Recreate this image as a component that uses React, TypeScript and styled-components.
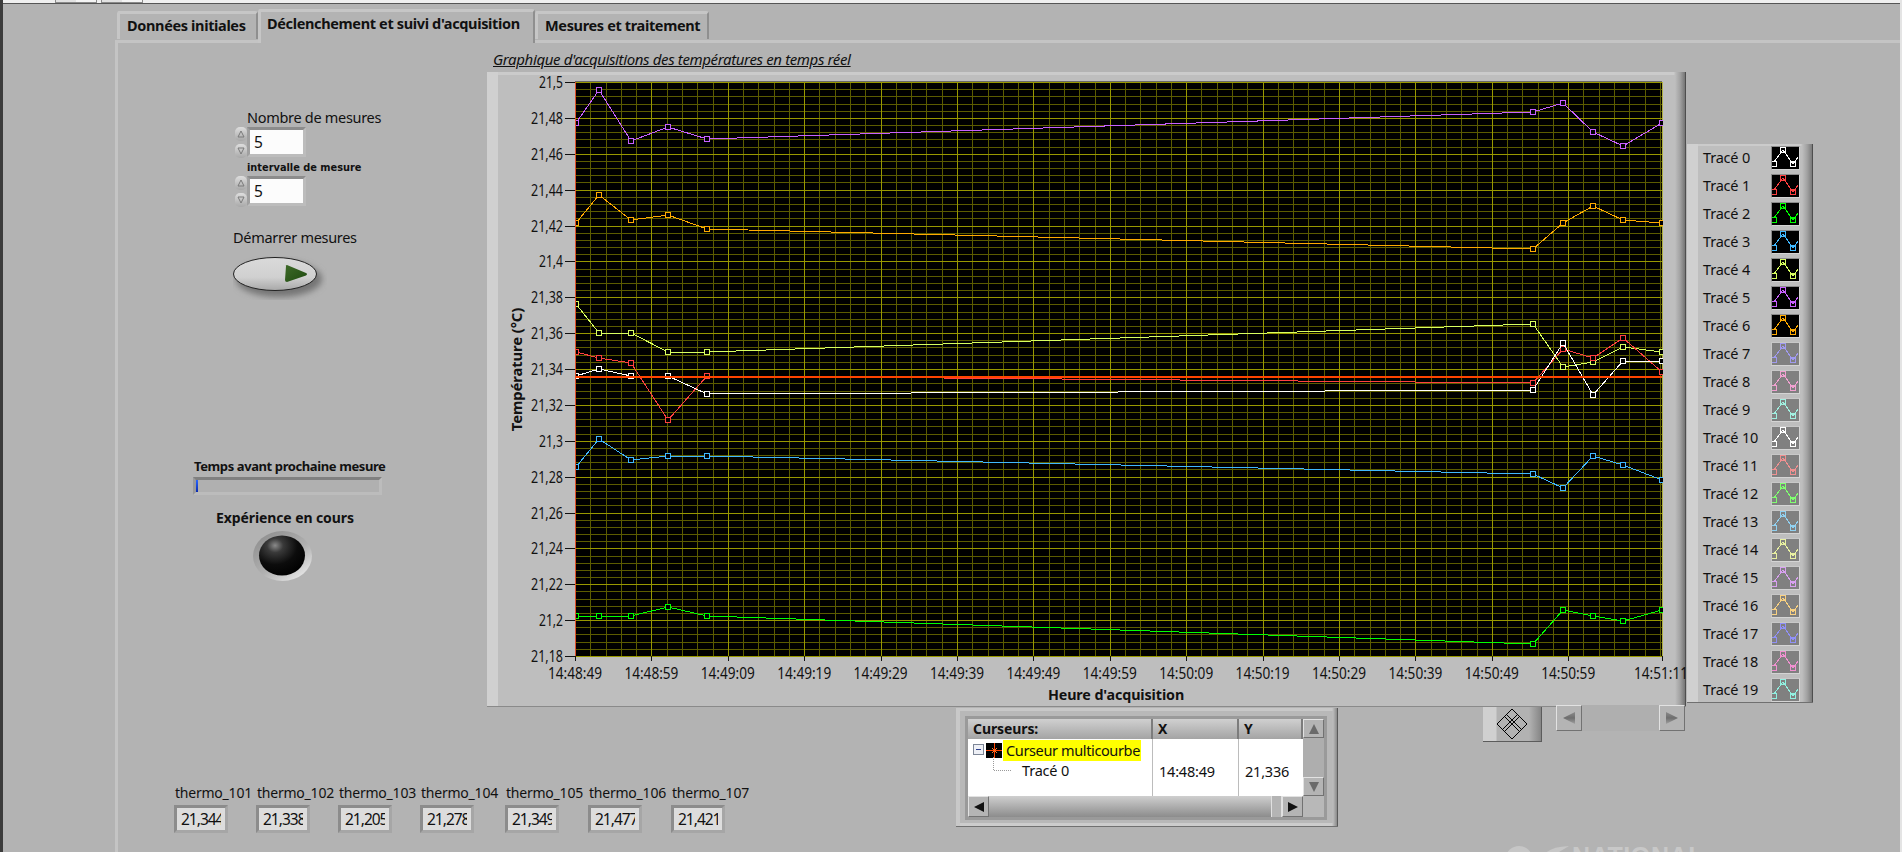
import React from "react";
import styled, { createGlobalStyle } from "styled-components";

const GlobalStyle = createGlobalStyle`
  html, body { margin: 0; padding: 0; background: #b3b3b3; overflow: hidden; }
  * { box-sizing: border-box; }
`;

const FONT = `"Noto Sans", "Open Sans", sans-serif`;

const Window = styled.div`
  position: relative;
  width: 1902px;
  height: 852px;
  overflow: hidden;
  display: flex;
  flex-direction: column;
  background: #b3b3b3;
  border-left: 3px solid #3c3c3c;
  border-right: 2px solid #e4e4e4;
  font-family: ${FONT};
  color: #111;
`;

const TopStrip = styled.div`
  height: 4px;
  flex: none;
  display: flex;
  gap: 4px;
  padding-left: 52px;
  background: #efefef;
  border-bottom: 1px solid #555;
`;

const TopButton = styled.span`
  width: 42px;
  height: 3px;
  display: flex;
  background: linear-gradient(to right, #e2e2e2 50%, #f4f4f4 50%);
  border: 1px solid #8a8a8a;
  border-top: 0;
`;

const TabStage = styled.div`
  flex: 1;
  display: flex;
  flex-direction: column;
  padding-left: 112px;
  min-height: 0;
`;

const TabStrip = styled.div`
  height: 31px;
  margin-top: 5px;
  padding-left: 2px;
  display: flex;
  align-items: flex-end;
  flex: none;
  position: relative;
  z-index: 2;
`;

const Tab = styled.div<{ $active?: boolean; $w: number }>`
  width: ${(p) => p.$w}px;
  height: ${(p) => (p.$active ? 34 : 28)}px;
  margin-bottom: ${(p) => (p.$active ? -3 : 1)}px;
  padding: ${(p) => (p.$active ? "1px 0 0 6px" : "1px 0 0 7px")};
  background: #b3b3b3;
  border: 3px solid #c6c6c6;
  border-bottom: 0;
  border-right: 2px solid #8f8f8f;
  border-radius: 3px 3px 0 0;
  font-size: 14.5px;
  font-weight: 700;
  letter-spacing: -0.35px;
  line-height: 20px;
  white-space: nowrap;
`;

const Pane = styled.div`
  flex: 1;
  border-top: 3px solid #c4c4c4;
  border-left: 3px solid #c4c4c4;
  display: flex;
  flex-direction: column;
  min-height: 0;
`;

const UpperRow = styled.div`
  display: flex;
  height: 664px;
  flex: none;
`;

const LowerRow = styled.div`
  display: flex;
  align-items: flex-start;
  flex: 1;
`;

const LeftColumn = styled.div`
  width: 369px;
  flex: none;
  display: flex;
  flex-direction: column;
  align-items: flex-start;
  padding-top: 64px;
`;

const Caption = styled.div<{ $indent: number; $top?: number; $bold?: number }>`
  margin-left: ${(p) => p.$indent}px;
  margin-top: ${(p) => p.$top ?? 0}px;
  height: 20px;
  line-height: 20px;
  font-size: ${(p) => p.$bold ?? 14.5}px;
  font-weight: ${(p) => (p.$bold ? 700 : 400)};
  letter-spacing: ${(p) => (p.$bold ? (p.$bold < 13.5 ? "-0.4px" : "-0.1px") : "-0.3px")};
  white-space: nowrap;
`;

const TinyCaption = styled.div`
  margin-left: 129px;
  height: 18px;
  line-height: 20px;
  font-family: "DejaVu Sans", sans-serif;
  font-size: 9.8px;
  font-weight: 700;
  white-space: nowrap;
`;

const NumericRow = styled.div`
  margin-left: 117px;
  display: flex;
  height: 31px;
`;

const Spinner = styled.div`
  width: 12px;
  display: flex;
  flex-direction: column;
  justify-content: space-between;
`;

const SpinButton = styled.div`
  width: 12px;
  height: 14px;
  display: flex;
  background: linear-gradient(to bottom, #dedede, #a8a8a8);
  border-radius: 5px;
  align-items: center;
  justify-content: center;
`;

const NumericField = styled.div`
  width: 59px;
  height: 30px;
  border-style: solid;
  border-width: 3px;
  border-color: #8c8c8c #bcbcbc #bcbcbc #a0a0a0;
  background: #fcfcfc;
  padding-left: 4px;
  font-size: 15.5px;
  line-height: 24px;
`;

const OvalWrap = styled.div`
  margin-left: 115px;
  margin-top: 9px;
  height: 44px;
  display: flex;
`;

const ProgressTrack = styled.div`
  margin-left: 75px;
  margin-top: 1px;
  width: 189px;
  height: 18px;
  background: #b0b0b0;
  border-style: solid;
  border-width: 3px;
  border-color: #808080 #bcbcbc #bcbcbc #9a9a9a;
  display: flex;
`;

const ProgressFill = styled.div`
  width: 2px;
  background: linear-gradient(to bottom, #2a66ff, #0a2bb0);
`;

const LedWrap = styled.div`
  margin-left: 135px;
  margin-top: 3px;
  display: flex;
`;

const CenterColumn = styled.div`
  width: 1199px;
  flex: none;
  display: flex;
  flex-direction: column;
`;

const ChartTitle = styled.div`
  height: 29px;
  padding: 6px 0 0 6px;
  line-height: 20px;
  font-size: 15px;
  font-style: italic;
  text-decoration: underline;
  letter-spacing: -0.37px;
  white-space: nowrap;
`;

const ChartFrame = styled.div`
  height: 635px;
  display: flex;
  background:
    linear-gradient(to right, #d0d0d0 0 11px, transparent 11px),
    linear-gradient(to left, #4e4e4e 0 1px, #757575 1px, #a2a2a2 6px, #bebebe 11px, transparent 12px),
    linear-gradient(to bottom, #cbcbcb 0 3px, #bebebe 3px);
  border-bottom: 1px solid #8a8a8a;
`;

const LegendPanel = styled.div`
  width: 126px;
  height: 559px;
  margin: 101px 0 0 1px;
  padding: 2px 0 0 16px;
  overflow: hidden;
  flex: none;
  border-bottom: 1px solid #707070;
  background:
    linear-gradient(to right, #d0d0d0 0 11px, transparent 11px),
    linear-gradient(to left, #4e4e4e 0 1px, #7a7a7a 1px, #a2a2a2 6px, #bebebe 11px, transparent 12px),
    linear-gradient(to bottom, #cbcbcb 0 2px, #bebebe 2px);
`;

const LegendRow = styled.div`
  height: 28px;
  display: flex;
  align-items: flex-start;
`;

const LegendLabel = styled.span`
  width: 68px;
  height: 23px;
  line-height: 22px;
  font-size: 14.5px;
  letter-spacing: -0.2px;
  white-space: nowrap;
`;

const Swatch = styled.div<{ $active: boolean }>`
  width: 29px;
  height: 24px;
  display: flex;
  background: ${(p) => (p.$active ? "#000" : "#808080")};
  border-right: 1px solid #d4d4d4;
  border-bottom: 1px solid #d4d4d4;
  border-left: 1px solid ${(p) => (p.$active ? "#8a8a8a" : "#c8c8c8")};
  border-top: 1px solid ${(p) => (p.$active ? "#8a8a8a" : "#c8c8c8")};
`;

const ThermoGrid = styled.div`
  margin: 76px 0 0 56px;
  display: grid;
  grid-template-columns: 82px 82px 82px 85px 83px 83px 55px;
  flex: none;
`;

const ThermoCell = styled.div`
  display: flex;
  flex-direction: column;
`;

const ThermoLabel = styled.div`
  height: 22px;
  margin-left: 1px;
  line-height: 20px;
  font-size: 14px;
  letter-spacing: -0.22px;
  white-space: nowrap;
`;

const ThermoBox = styled.div`
  width: 54px;
  height: 28px;
  border-style: solid;
  border-width: 3px;
  border-color: #8c8c8c #a6a6a6 #a6a6a6 #8c8c8c;
  background: #dddddd;
  padding: 0 4px 0 4px;
`;

const ThermoValue = styled.div`
  width: 40px;
  overflow: hidden;
  white-space: nowrap;
  font-size: 15.5px;
  letter-spacing: -1px;
  line-height: 22px;
`;

const CursorPanel = styled.div`
  margin: 1px 0 0 230px;
  width: 382px;
  height: 119px;
  flex: none;
  padding: 11px 0 0 12px;
  border-bottom: 1px solid #707070;
  background:
    linear-gradient(to right, #c8c8c8 0 4px, transparent 4px),
    linear-gradient(to left, #5a5a5a 0 1px, #8a8a8a 1px, #bcbcbc 5px, transparent 6px),
    linear-gradient(to bottom, #c8c8c8 0 3px, #b8b8b8 3px, #b8b8b8 calc(100% - 3px), #cccccc calc(100% - 3px));
`;

const CursorGrid = styled.div`
  width: 356px;
  display: grid;
  grid-template-columns: 185px 86px 64px 21px;
  grid-template-rows: 20px 57px 21px;
  outline: 3px solid #9a9a9a;
`;

const HeaderCell = styled.div<{ $pad: number }>`
  padding-left: ${(p) => p.$pad}px;
  background: linear-gradient(to bottom, #d0d0d0, #a4a4a4);
  border-right: 2px solid #7c7c7c;
  font-size: 14px;
  font-weight: 700;
  line-height: 20px;
  letter-spacing: -0.1px;
`;

const BodyCell = styled.div<{ $divider?: boolean }>`
  position: relative;
  background: #fff;
  border-right: ${(p) => (p.$divider ? "1px solid #bcbcbc" : "0")};
  font-size: 14.5px;
  letter-spacing: -0.2px;
`;

const TreeRow = styled.div`
  height: 22px;
  display: flex;
  align-items: center;
  padding-left: 5px;
`;

const Highlight = styled.span`
  height: 21px;
  line-height: 21px;
  padding: 0 1px 0 3px;
  margin-left: 1px;
  letter-spacing: -0.37px;
  background: #ffff00;
  white-space: nowrap;
`;

const TreeChild = styled.div`
  position: absolute;
  left: 54px;
  top: 20px;
  height: 22px;
  line-height: 22px;
`;

const ValueText = styled.div`
  padding: 21px 0 0 6px;
  line-height: 22px;
`;

const VScrollCell = styled.div`
  grid-column: 4;
  grid-row: 1 / 3;
  display: flex;
  flex-direction: column;
  justify-content: space-between;
  background: #aeaeae;
`;

const HScroll = styled.div`
  grid-column: 1 / 4;
  display: flex;
  background: #b8b8b8;
`;

const ScrollThumb = styled.div`
  width: 282px;
  background: linear-gradient(to bottom, #cfcfcf, #8c8c8c);
`;

const ScrollGap = styled.div`
  flex: 1;
  border-left: 1px solid #e0e0e0;
  border-right: 1px solid #e0e0e0;
  background: #b4b4b4;
`;

const SquareButton = styled.div<{ $size: number }>`
  width: ${(p) => p.$size}px;
  height: ${(p) => (p.$size === 21 ? 19 : p.$size)}px;
  display: flex;
  align-items: center;
  justify-content: center;
  background: #b4b4b4;
  border-style: solid;
  border-width: 1px;
  border-color: #e2e2e2 #727272 #727272 #e2e2e2;
`;

const HButton = styled(SquareButton)`
  height: 21px;
`;

const DiamondButton = styled.div`
  margin: 0 0 0 145px;
  width: 59px;
  height: 35px;
  flex: none;
  display: flex;
  align-items: center;
  justify-content: center;
  background: linear-gradient(to right, #d0d0d0 0 13px, #b2b2b2 14px, #b2b2b2 46px, #868686 58px);
  border-bottom: 1px solid #5c5c5c;
  border-right: 1px solid #5c5c5c;
`;

const PanButtons = styled.div`
  margin: -2px 0 0 14px;
  width: 129px;
  height: 26px;
  flex: none;
  display: flex;
  justify-content: space-between;
  background: #afafaf;
`;

const Watermark = styled.div`
  position: absolute;
  left: 1494px;
  top: 845px;
  display: flex;
  align-items: flex-start;
  gap: 3px;
  color: #c8c8c8;
  font-family: "Liberation Sans", sans-serif;
  font-weight: 700;
  font-size: 25px;
  line-height: 22px;
  letter-spacing: 0.6px;
`;

/* ---------- chart data ---------- */

const X_PTS = [576, 599, 631, 668, 707, 1533, 1563, 1593, 1623, 1662];

const SERIES: { color: string; y: number[] }[] = [
  { color: "#c860ff", y: [123, 90, 141, 127, 139, 112, 103, 132, 146, 123] },
  { color: "#ffaa00", y: [223, 195, 220, 215, 229, 249, 223, 206, 220, 223] },
  { color: "#d8ff60", y: [304, 333, 333, 352, 352, 324, 367, 362, 347, 352] },
  { color: "#40b8ff", y: [467, 439, 460, 456, 456, 474, 488, 456, 465, 480] },
  { color: "#00ff00", y: [616, 616, 616, 607, 616, 644, 610, 616, 621, 610] },
  { color: "#ff4040", y: [352, 358, 363, 420, 376, 383, 349, 358, 338, 372] },
  { color: "#ffffff", y: [376, 369, 376, 376, 394, 390, 343, 395, 361, 361] },
];

const PLOT = { l: 575, r: 1662, t: 82, b: 656 };
const Y_STEP = (PLOT.b - PLOT.t) / 16;
const X_STEP = 76.4;

const Y_LABELS = ["21,5","21,48","21,46","21,44","21,42","21,4","21,38","21,36","21,34","21,32","21,3","21,28","21,26","21,24","21,22","21,2","21,18"];
const X_LABELS = ["14:48:49","14:48:59","14:49:09","14:49:19","14:49:29","14:49:39","14:49:49","14:49:59","14:50:09","14:50:19","14:50:29","14:50:39","14:50:49","14:50:59"];

const axisText = { fontFamily: FONT, fontSize: 16, fill: "#111" } as const;
const axisTitle = { fontFamily: FONT, fontWeight: 700, letterSpacing: "-0.1px", fill: "#111" } as const;

function Chart() {
  const minorV: number[] = [];
  for (let x = PLOT.l; x < PLOT.r; x += X_STEP / 5) minorV.push(Math.round(x));
  const minorH: number[] = [];
  for (let i = 0; i <= 80; i++) minorH.push(Math.round(PLOT.t + (i * Y_STEP) / 5));
  return (
    <svg width="1199" height="634" viewBox="487 72 1199 634">
      <defs>
        <clipPath id="plotClip">
          <rect x={PLOT.l} y={PLOT.t} width={PLOT.r - PLOT.l + 1} height={PLOT.b - PLOT.t} />
        </clipPath>
      </defs>
      <rect x={PLOT.l} y={PLOT.t} width={PLOT.r - PLOT.l} height={PLOT.b - PLOT.t} fill="#000" />
      <line x1={PLOT.l} x2={PLOT.r} y1={PLOT.t - 0.5} y2={PLOT.t - 0.5} stroke="#6a6a6a" />
      <g shapeRendering="crispEdges" strokeWidth="1">
        {minorV.map((x) => (
          <line key={`mv${x}`} x1={x + 0.5} x2={x + 0.5} y1={PLOT.t} y2={PLOT.b} stroke="#5c5c00" />
        ))}
        {minorH.map((y) => (
          <line key={`mh${y}`} x1={PLOT.l} x2={PLOT.r} y1={y + 0.5} y2={y + 0.5} stroke="#5c5c00" />
        ))}
        {X_LABELS.map((_, i) => {
          const x = Math.round(PLOT.l + i * X_STEP) + 0.5;
          return <line key={`Mv${i}`} x1={x} x2={x} y1={PLOT.t} y2={PLOT.b} stroke="#989800" />;
        })}
        {Y_LABELS.map((_, i) => {
          const y = Math.round(PLOT.t + i * Y_STEP) + 0.5;
          return <line key={`Mh${i}`} x1={PLOT.l} x2={PLOT.r} y1={y} y2={y} stroke="#989800" />;
        })}
        <line x1={PLOT.r + 0.5} x2={PLOT.r + 0.5} y1={PLOT.t} y2={PLOT.b} stroke="#b0b040" />
      </g>
      <g clipPath="url(#plotClip)" shapeRendering="crispEdges">
        {SERIES.map((s) => (
          <g key={s.color}>
            <polyline
              points={s.y.map((y, i) => `${X_PTS[i]},${y}`).join(" ")}
              fill="none"
              stroke={s.color}
              strokeWidth="1"
            />
            {s.y.map((y, i) => (
              <rect key={i} x={X_PTS[i] - 2.5} y={y - 2.5} width="5" height="5" fill="#000" stroke={s.color} strokeWidth="1" />
            ))}
          </g>
        ))}
        <line x1={PLOT.l} x2={PLOT.r} y1={376.5} y2={376.5} stroke="#ff4400" strokeWidth="2" />
      </g>
      <line x1={PLOT.l + 0.5} x2={PLOT.l + 0.5} y1={PLOT.t} y2={PLOT.b} stroke="#e0502a" strokeWidth="1.4" shapeRendering="crispEdges" />
      <g shapeRendering="crispEdges" stroke="#111" strokeWidth="1">
        {Y_LABELS.map((_, i) => {
          const y = Math.round(PLOT.t + i * Y_STEP) + 0.5;
          return <line key={`ty${i}`} x1={PLOT.l - 10} x2={PLOT.l} y1={y} y2={y} />;
        })}
        {X_LABELS.map((_, i) => {
          const x = Math.round(PLOT.l + i * X_STEP) + 0.5;
          return <line key={`tx${i}`} x1={x} x2={x} y1={PLOT.b} y2={PLOT.b + 5} />;
        })}
        <line x1={PLOT.r} x2={PLOT.r} y1={PLOT.b} y2={PLOT.b + 5} />
      </g>
      {Y_LABELS.map((t, i) => (
        <text
          key={t}
          x={563}
          y={PLOT.t + i * Y_STEP + 6}
          textAnchor="end"
          textLength={t.length === 5 ? 32 : 24}
          lengthAdjust="spacingAndGlyphs"
          style={axisText}
        >
          {t}
        </text>
      ))}
      {X_LABELS.map((t, i) => (
        <text
          key={t}
          x={PLOT.l + i * X_STEP}
          y={679}
          textAnchor="middle"
          textLength={54}
          lengthAdjust="spacingAndGlyphs"
          style={axisText}
        >
          {t}
        </text>
      ))}
      <text x={1634} y={679} textLength={54} lengthAdjust="spacingAndGlyphs" style={axisText}>14:51:11</text>
      <text x={1116} y={700} textAnchor="middle" style={{ ...axisTitle, fontSize: 14.3 }}>Heure d'acquisition</text>
      <text transform="translate(522 369.5) rotate(-90)" textAnchor="middle" style={{ ...axisTitle, fontSize: 14.8 }}>Température (°C)</text>
    </svg>
  );
}

const LEGEND = ["#ffffff","#ff4040","#00ff00","#40b8ff","#d8ff60","#c860ff","#ffaa00","#a09af0","#f0a0d0","#a0f0e0","#ffffff","#f09090","#80ff70","#90d0f0","#e8f0a0","#d8a0f0","#f8d080","#9090f8","#f090d0","#90f0e0"];

function PlotGlyph({ color }: { color: string }) {
  return (
    <svg width="27" height="22" viewBox="0 0 27 22" shapeRendering="crispEdges">
      <polyline points="2,15 11,3 21,17 26,10" fill="none" stroke={color} strokeWidth="1" />
      {[[2, 17], [11, 3], [21, 17]].map(([x, y]) => (
        <rect key={x} x={x - 2.5} y={y - 2.5} width="5" height="5" fill="none" stroke={color} strokeWidth="1" />
      ))}
    </svg>
  );
}

function Arrow({ dir, size = 12, color = "#6a6a6a" }: { dir: "up" | "down" | "left" | "right"; size?: number; color?: string }) {
  const rot = { up: 0, right: 90, down: 180, left: 270 }[dir];
  return (
    <svg width={size} height={size} viewBox="0 0 12 12">
      <polygon points="6,1 11,11 1,11" fill={color} transform={`rotate(${rot} 6 6)`} />
    </svg>
  );
}

function SpinArrow({ up }: { up?: boolean }) {
  return (
    <svg width="8" height="8" viewBox="0 0 8 8">
      <polygon points={up ? "4,1 7,7 1,7" : "1,1 7,1 4,7"} fill="none" stroke="#7a7a7a" strokeWidth="1" />
    </svg>
  );
}

function Numeric({ value }: { value: string }) {
  return (
    <NumericRow>
      <Spinner>
        <SpinButton><SpinArrow up /></SpinButton>
        <SpinButton><SpinArrow /></SpinButton>
      </Spinner>
      <NumericField>{value}</NumericField>
    </NumericRow>
  );
}

function OvalButton() {
  return (
    <svg width="94" height="44" viewBox="0 0 94 44">
      <defs>
        <linearGradient id="ovalFill" x1="0" y1="0" x2="0" y2="1">
          <stop offset="0" stopColor="#dadada" />
          <stop offset="0.6" stopColor="#d0d0d0" />
          <stop offset="1" stopColor="#a8a8a8" />
        </linearGradient>
        <linearGradient id="arrowFill" x1="0" y1="0" x2="1" y2="1">
          <stop offset="0" stopColor="#3e6a28" />
          <stop offset="1" stopColor="#1f4a10" />
        </linearGradient>
        <filter id="ovalBlur" x="-20%" y="-30%" width="140%" height="160%">
          <feGaussianBlur stdDeviation="3" />
        </filter>
      </defs>
      <ellipse cx="46" cy="23" rx="43" ry="18" fill="#757575" filter="url(#ovalBlur)" />
      <ellipse cx="42" cy="18" rx="41.5" ry="16.5" fill="url(#ovalFill)" stroke="#222" strokeWidth="1" />
      <path d="M53 10 Q52 9.5 54 9 L73 17 Q75 18 73 19.5 L54 26 Q52 26 52 24 Z" fill="url(#arrowFill)" />
    </svg>
  );
}

function Led() {
  return (
    <svg width="59" height="50" viewBox="0 0 59 50">
      <defs>
        <linearGradient id="ledRing" x1="0.1" y1="0" x2="0.9" y2="1">
          <stop offset="0" stopColor="#8c8c8c" />
          <stop offset="0.55" stopColor="#b0b0b0" />
          <stop offset="1" stopColor="#f0f0f0" />
        </linearGradient>
        <radialGradient id="ledCore" cx="0.35" cy="0.25" r="0.8">
          <stop offset="0" stopColor="#8a8a8a" />
          <stop offset="0.22" stopColor="#3a3a3a" />
          <stop offset="0.6" stopColor="#0c0c0c" />
          <stop offset="1" stopColor="#000" />
        </radialGradient>
      </defs>
      <ellipse cx="29.5" cy="25" rx="29.5" ry="25" fill="url(#ledRing)" />
      <ellipse cx="29" cy="24.5" rx="23" ry="20" fill="url(#ledCore)" />
    </svg>
  );
}

function CursorIcon() {
  return (
    <svg width="16" height="15" viewBox="0 0 16 15" shapeRendering="crispEdges">
      <rect width="16" height="15" fill="#000" />
      <path d="M8.5 0V15M0 7.5H16" stroke="#ff4400" strokeWidth="1" />
      <path d="M6 5L11 10M11 5L6 10" stroke="#ff7a30" strokeWidth="1" />
    </svg>
  );
}

function ExpandBox() {
  return (
    <svg width="12" height="12" viewBox="0 0 12 12" shapeRendering="crispEdges">
      <rect x="0.5" y="0.5" width="10" height="10" fill="#eef0f6" stroke="#7d8696" />
      <path d="M3 5.5H8" stroke="#2b3f8f" />
    </svg>
  );
}

const TreeSpacer = styled.span`
  width: 1px;
`;

const TreeLine = styled.svg`
  position: absolute;
  left: 25px;
  top: 18px;
`;

function DiamondIcon() {
  return (
    <svg width="32" height="32" viewBox="0 0 32 32" shapeRendering="crispEdges">
      <g fill="none" stroke="#000" strokeWidth="1">
        <path d="M16 1L31 16L16 31L1 16Z" />
        <path d="M8.5 8.5L23.5 23.5M10.5 6.5L25.5 21.5M23.5 8.5L8.5 23.5M21.5 6.5L6.5 21.5" />
      </g>
    </svg>
  );
}

function PanArrow({ left }: { left?: boolean }) {
  return (
    <svg width="14" height="14" viewBox="0 0 14 14">
      <defs>
        <linearGradient id={left ? "panL" : "panR"} x1="0" y1="0" x2="0" y2="1">
          <stop offset="0" stopColor="#8a8a8a" />
          <stop offset="0.5" stopColor="#6e6e6e" />
          <stop offset="1" stopColor="#a0a0a0" />
        </linearGradient>
      </defs>
      <polygon points={left ? "13,1 13,13 1,7" : "1,1 1,13 13,7"} fill={`url(#${left ? "panL" : "panR"})`} />
    </svg>
  );
}

const THERMO = [
  ["thermo_101", "21,344"],
  ["thermo_102", "21,338"],
  ["thermo_103", "21,205"],
  ["thermo_104", "21,278"],
  ["thermo_105", "21,349"],
  ["thermo_106", "21,477"],
  ["thermo_107", "21,421"],
];

export default function App() {
  return (
    <>
      <GlobalStyle />
      <Window>
        <TopStrip>
          <TopButton />
          <TopButton />
        </TopStrip>
        <TabStage>
          <TabStrip>
            <Tab $w={141}>Données initiales</Tab>
            <Tab $w={277} $active>Déclenchement et suivi d'acquisition</Tab>
            <Tab $w={174}>Mesures et traitement</Tab>
          </TabStrip>
          <Pane>
            <UpperRow>
              <LeftColumn>
                <Caption $indent={129}>Nombre de mesures</Caption>
                <Numeric value="5" />
                <TinyCaption>intervalle de mesure</TinyCaption>
                <Numeric value="5" />
                <Caption $indent={115} $top={20}>Démarrer mesures</Caption>
                <OvalWrap><OvalButton /></OvalWrap>
                <Caption $indent={76} $top={156} $bold={13}>Temps avant prochaine mesure</Caption>
                <ProgressTrack><ProgressFill /></ProgressTrack>
                <Caption $indent={98} $top={13} $bold={14}>Expérience en cours</Caption>
                <LedWrap><Led /></LedWrap>
              </LeftColumn>
              <CenterColumn>
                <ChartTitle>Graphique d'acquisitions des températures en temps réel</ChartTitle>
                <ChartFrame><Chart /></ChartFrame>
              </CenterColumn>
              <LegendPanel>
                {LEGEND.map((c, i) => (
                  <LegendRow key={i}>
                    <LegendLabel>Tracé {i}</LegendLabel>
                    <Swatch $active={i < 7}><PlotGlyph color={c} /></Swatch>
                  </LegendRow>
                ))}
              </LegendPanel>
            </UpperRow>
            <LowerRow>
              <ThermoGrid>
                {THERMO.map(([name, value]) => (
                  <ThermoCell key={name}>
                    <ThermoLabel>{name}</ThermoLabel>
                    <ThermoBox><ThermoValue>{value}</ThermoValue></ThermoBox>
                  </ThermoCell>
                ))}
              </ThermoGrid>
              <CursorPanel>
                <CursorGrid>
                  <HeaderCell $pad={5}>Curseurs:</HeaderCell>
                  <HeaderCell $pad={5}>X</HeaderCell>
                  <HeaderCell $pad={5}>Y</HeaderCell>
                  <VScrollCell>
                    <SquareButton $size={21}><Arrow dir="up" /></SquareButton>
                    <SquareButton $size={21}><Arrow dir="down" /></SquareButton>
                  </VScrollCell>
                  <BodyCell $divider>
                    <TreeRow>
                      <ExpandBox />
                      <TreeSpacer />
                      <CursorIcon />
                      <Highlight>Curseur multicourbe</Highlight>
                    </TreeRow>
                    <TreeLine width="18" height="18" viewBox="0 0 18 18">
                      <path d="M0.5 0V13.5H18" fill="none" stroke="#9a9a9a" strokeDasharray="1 1" />
                    </TreeLine>
                    <TreeChild>Tracé 0</TreeChild>
                  </BodyCell>
                  <BodyCell $divider><ValueText>14:48:49</ValueText></BodyCell>
                  <BodyCell><ValueText>21,336</ValueText></BodyCell>
                  <HScroll>
                    <HButton $size={21}><Arrow dir="left" color="#111" /></HButton>
                    <ScrollThumb />
                    <ScrollGap />
                    <HButton $size={21}><Arrow dir="right" color="#111" /></HButton>
                  </HScroll>
                </CursorGrid>
              </CursorPanel>
              <DiamondButton><DiamondIcon /></DiamondButton>
              <PanButtons>
                <SquareButton $size={26}><PanArrow left /></SquareButton>
                <SquareButton $size={26}><PanArrow /></SquareButton>
              </PanButtons>
            </LowerRow>
          </Pane>
        </TabStage>
        <Watermark>
          <svg width="72" height="12" viewBox="0 0 72 12">
            <ellipse cx="22" cy="13" rx="13" ry="12" fill="#c6c6c6" />
            <path d="M46 12Q50 2 72 1L62 7Q52 7 49 12Z" fill="#c6c6c6" />
          </svg>
          <span>NATIONAL</span>
        </Watermark>
      </Window>
    </>
  );
}
